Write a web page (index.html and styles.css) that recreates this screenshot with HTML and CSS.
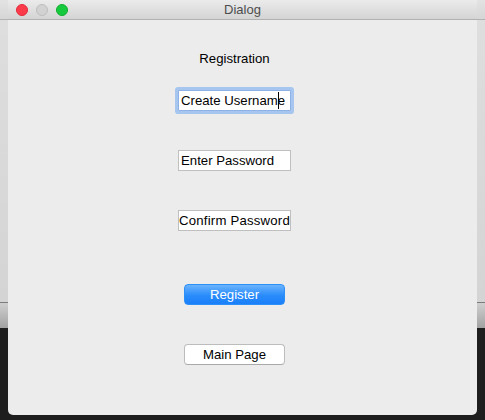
FILE: index.html
```html
<!DOCTYPE html>
<html lang="en">
<head>
<meta charset="utf-8">
<title>Dialog</title>
<link rel="stylesheet" href="styles.css">
</head>
<body>
  <div class="window">
    <div class="titlebar">
      <div class="lights">
        <span class="light light-close"></span>
        <span class="light light-min"></span>
        <span class="light light-zoom"></span>
      </div>
      <div class="title">Dialog</div>
      <div></div>
    </div>
    <div class="content">
      <div class="heading">Registration</div>
      <div class="field field-focused">Create Userna<span class="caret-before">m</span><span class="caret"></span>e</div>
      <div class="field field-second">Enter Password</div>
      <div class="field field-third">Confirm Password</div>
      <button class="btn btn-primary">Register</button>
      <button class="btn btn-secondary">Main Page</button>
    </div>
  </div>
</body>
</html>
```

FILE: styles.css
```css
html, body {
  margin: 0;
  padding: 0;
}

body {
  width: 485px;
  height: 420px;
  overflow: hidden;
  font-family: "Liberation Sans", Arial, sans-serif;
  font-size: 13px;
  color: #000;
  background: linear-gradient(to bottom,
    #e3e3e3 0, #d6d6d6 19px,
    #b2b2b2 19px, #b2b2b2 20px,
    #dedede 20px, #d4d4d4 302px,
    #7c7c7c 302px, #7c7c7c 303px,
    #cfcfcf 303px, #a2a2a2 328px,
    #1e1e1e 328px, #1e1e1e 100%);
}

.window {
  margin-left: 8px;
  width: 469px;
  height: 415px;
  background: #ececec;
  border-radius: 0 0 5px 5px;
  display: flex;
  flex-direction: column;
}

.titlebar {
  height: 19px;
  border-bottom: 1px solid #b1b1b1;
  background: linear-gradient(to bottom, #ebebeb, #d4d4d4);
  display: grid;
  grid-template-columns: 1fr auto 1fr;
  align-items: center;
}

.lights {
  display: flex;
  gap: 8px;
  padding-left: 8px;
}

.light {
  width: 12px;
  height: 12px;
  border-radius: 50%;
  box-sizing: border-box;
}

.light-close {
  background: #fc3b4a;
  border: 1px solid #e22a3a;
}

.light-min {
  background: #d2d2d2;
  border: 1px solid #bdbdbd;
}

.light-zoom {
  background: #17c93d;
  border: 1px solid #10ae30;
}

.title {
  color: #4d4d4d;
  font-size: 13px;
  line-height: 19px;
}

.content {
  flex: 1;
  padding-right: 16px;
  display: flex;
  flex-direction: column;
  align-items: center;
}

.heading {
  margin-top: 31px;
  line-height: 16px;
  font-size: 13.2px;
}

.field {
  box-sizing: border-box;
  width: 113px;
  height: 21px;
  border: 1px solid #bfbfbf;
  background: #fff;
  font-size: 13.2px;
  line-height: 19px;
  padding-left: 2px;
  white-space: nowrap;
  overflow: hidden;
}

.field-focused {
  margin-top: 23px;
  padding-left: 2px;
  border-color: #8fb2e6;
  border-radius: 1px;
  box-shadow: 0 0 0 3px #a6c6f0;
}

.caret {
  display: inline-block;
  width: 1px;
  height: 17px;
  background: #000;
  vertical-align: -4px;
  margin-right: -1px;
}

.field-second {
  margin-top: 39px;
}

.field-third {
  margin-top: 39px;
  padding-left: 0;
  letter-spacing: 0.2px;
}

.btn {
  box-sizing: border-box;
  width: 101px;
  height: 21px;
  padding: 0;
  font-family: inherit;
  font-size: 13.2px;
  line-height: 19px;
  border-radius: 4px;
}

.btn-primary {
  margin-top: 53px;
  color: #fff;
  border: 1px solid #2d8ff8;
  background: linear-gradient(to bottom, #6ab3fd, #2a8cfb 55%, #1a7ff9);
}

.btn-secondary {
  margin-top: 39px;
  color: #000;
  background: #fff;
  border: 1px solid #bcbcbc;
  border-bottom-color: #a9a9a9;
}
```
